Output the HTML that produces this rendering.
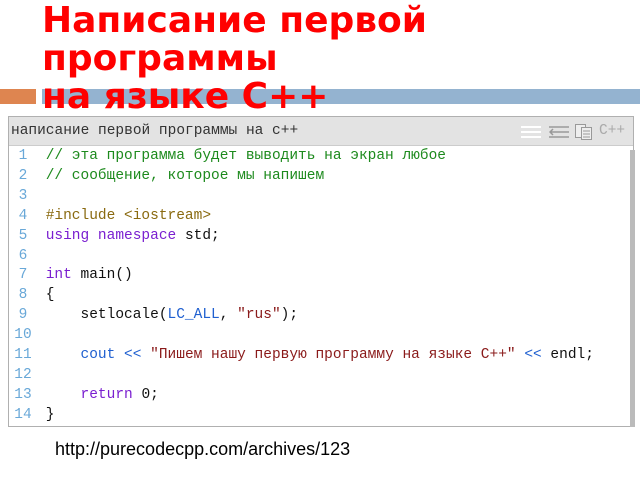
<!DOCTYPE html>
<html><head><meta charset="utf-8"><style>
body{margin:0;width:640px;height:480px;background:#fff;position:relative;overflow:hidden;font-family:"Liberation Sans",sans-serif}
.t{position:absolute;left:42px;top:2px;color:#f00;font:bold 36px/38px "DejaVu Sans",sans-serif;z-index:2;white-space:nowrap}
.ob{position:absolute;left:0;top:89px;width:36px;height:15px;background:#de8550}
.bb{position:absolute;left:42px;top:89px;width:598px;height:15px;background:#94b3d0}
.box{position:absolute;left:8px;top:116px;width:624px;height:309px;border:1px solid #b0b0b0;background:#fff}
.hd{height:28px;background:#e3e3e3;border-bottom:1px solid #ccc;font:14.5px/28px "Liberation Mono",monospace;color:#333;padding-left:2px;transform-origin:left;}
.sb{position:absolute;right:-2px;top:33px;width:5px;height:277px;background:#bbb}
.code{position:absolute;left:0;top:30px;font:14.5px/19.9px "Liberation Mono",monospace;white-space:pre}
.n{display:inline-block;width:28px;text-align:center;color:#69a8d8}
.c{color:#1d8a1d}.p{color:#8a6a10}.k{color:#7a1fd0}.s{color:#8a1a1a}.b{color:#2060d0}.x{color:#111}
.ic{position:absolute;top:8px}
.url{position:absolute;left:55px;top:439px;font-size:18px;color:#000}
</style></head><body>
<div class="t">Написание первой<br>программы<br>на языке С++</div>
<div class="ob"></div><div class="bb"></div>
<div class="box">
<div class="hd">написание первой программы на с++</div>
<svg class="ic" style="left:512px" width="20" height="14"><g stroke="#fff" stroke-width="2"><line x1="0" y1="2" x2="20" y2="2"/><line x1="0" y1="7" x2="20" y2="7"/><line x1="0" y1="12" x2="20" y2="12"/></g></svg>
<svg class="ic" style="left:540px" width="20" height="14"><g stroke="#999" stroke-width="1.5" fill="none"><line x1="0" y1="2" x2="20" y2="2"/><path d="M20 7H1M4 4L1 7L4 10"/><line x1="0" y1="12" x2="20" y2="12"/></g></svg>
<svg class="ic" style="left:566px;top:7px" width="18" height="16"><g stroke="#999" fill="#eee"><rect x="0.5" y="0.5" width="10" height="13"/><rect x="6.5" y="3.5" width="10" height="12"/><path d="M8 7h7M8 10h7M8 13h7"/></g></svg>
<div style="position:absolute;left:590px;top:0;font:14.5px/28px 'Liberation Mono',monospace;color:#aaa">C++</div>
<div class="sb"></div>
<div class="code"><span class="n">1</span> <span class="c">// эта программа будет выводить на экран любое</span>
<span class="n">2</span> <span class="c">// сообщение, которое мы напишем</span>
<span class="n">3</span>
<span class="n">4</span> <span class="p">#include &lt;iostream&gt;</span>
<span class="n">5</span> <span class="k">using namespace</span> <span class="x">std;</span>
<span class="n">6</span>
<span class="n">7</span> <span class="k">int</span> <span class="x">main()</span>
<span class="n">8</span> <span class="x">{</span>
<span class="n">9</span>     <span class="x">setlocale(</span><span class="b">LC_ALL</span><span class="x">, </span><span class="s">"rus"</span><span class="x">);</span>
<span class="n">10</span>
<span class="n">11</span>     <span class="b">cout &lt;&lt;</span> <span class="s">"Пишем нашу первую программу на языке С++"</span> <span class="b">&lt;&lt;</span> <span class="x">endl;</span>
<span class="n">12</span>
<span class="n">13</span>     <span class="k">return</span> <span class="x">0;</span>
<span class="n">14</span> <span class="x">}</span></div>
</div>
<div class="url">http://purecodecpp.com/archives/123</div>
</body></html>
